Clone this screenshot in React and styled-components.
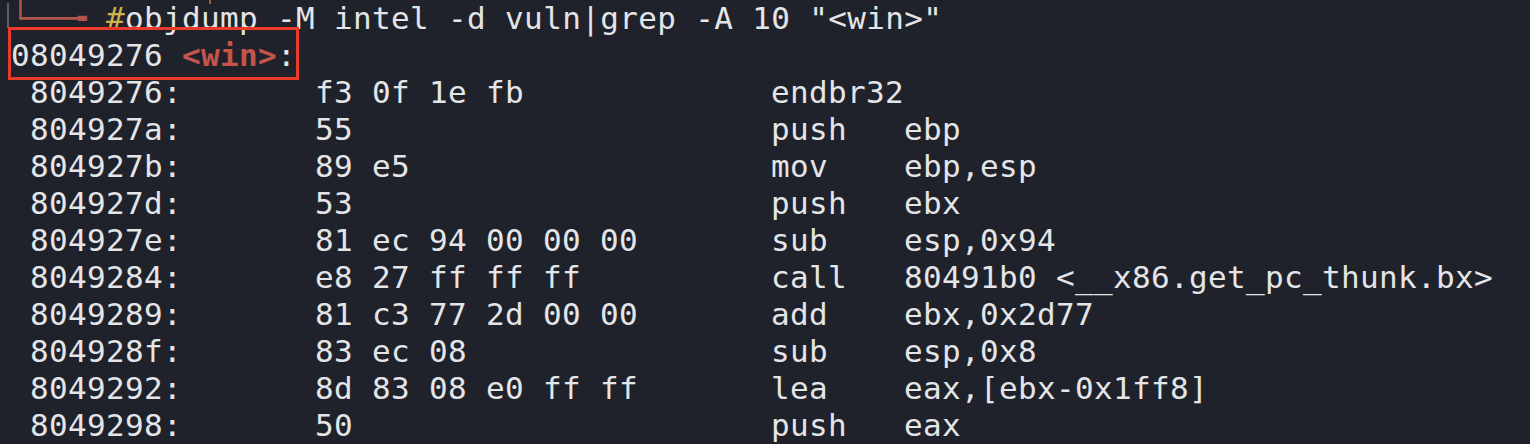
import React from 'react'
import styled, { createGlobalStyle } from 'styled-components'

const CH = 19

const GlobalStyle = createGlobalStyle`
  html, body {
    margin: 0;
    padding: 0;
    background: #1f222a;
  }
`

const Terminal = styled.div`
  width: 1530px;
  height: 444px;
  overflow: hidden;
  background: #1f222a;
  color: #e4e5e8;
  font-family: "DejaVu Sans Mono", "Liberation Mono", monospace;
  font-size: 31px;
  letter-spacing: 0.34px;
  line-height: 37px;
  padding-left: 11px;
  box-sizing: border-box;
`

const Line = styled.div`
  position: relative;
  display: flex;
  white-space: pre;
  height: 37px;
`

const PromptLine = styled(Line)`
  &::before {
    content: '';
    position: absolute;
    left: -4px;
    top: 3px;
    width: 2px;
    height: 25px;
    background: #5b5f68;
  }
  &::after {
    content: '';
    position: absolute;
    left: 198px;
    top: 0;
    width: 2px;
    height: 4px;
    background: #b0544d;
  }
`

const Tree = styled.span`
  color: #b0544d;
`

const Hash = styled.span`
  color: #cdb34a;
`

const Label = styled.span`
  color: #c4554b;
  font-weight: bold;
`

const Highlight = styled.span`
  position: absolute;
  left: -3px;
  top: -10px;
  width: 291px;
  height: 53px;
  border: 3px solid #ea3a2a;
  box-sizing: border-box;
  pointer-events: none;
`

const Cell = styled.span`
  flex: none;
  width: ${p => p.$cols ? `${p.$cols * CH}px` : 'auto'};
  padding-left: ${p => p.$indent ? `${CH}px` : '0'};
  box-sizing: border-box;
  overflow: hidden;
`

const rows = [
  ['8049276:', 'f3 0f 1e fb', 'endbr32', ''],
  ['804927a:', '55', 'push', 'ebp'],
  ['804927b:', '89 e5', 'mov', 'ebp,esp'],
  ['804927d:', '53', 'push', 'ebx'],
  ['804927e:', '81 ec 94 00 00 00', 'sub', 'esp,0x94'],
  ['8049284:', 'e8 27 ff ff ff', 'call', '80491b0 <__x86.get_pc_thunk.bx>'],
  ['8049289:', '81 c3 77 2d 00 00', 'add', 'ebx,0x2d77'],
  ['804928f:', '83 ec 08', 'sub', 'esp,0x8'],
  ['8049292:', '8d 83 08 e0 ff ff', 'lea', 'eax,[ebx-0x1ff8]'],
  ['8049298:', '50', 'push', 'eax'],
]

export default function App() {
  return (
    <>
      <GlobalStyle />
      <Terminal>
        <PromptLine>
          <Tree>└──╼ </Tree>
          <Hash>#</Hash>
          <span>objdump -M intel -d vuln|grep -A 10 "&lt;win&gt;"</span>
        </PromptLine>
        <Line>
          <span>08049276 </span>
          <Label>&lt;win&gt;</Label>
          <span>:</span>
          <Highlight />
        </Line>
        {rows.map(([addr, bytes, op, args]) => (
          <Line key={addr}>
            <Cell $cols={16} $indent>{addr}</Cell>
            <Cell $cols={24}>{bytes}</Cell>
            <Cell $cols={7}>{op}</Cell>
            <Cell>{args}</Cell>
          </Line>
        ))}
      </Terminal>
    </>
  )
}
